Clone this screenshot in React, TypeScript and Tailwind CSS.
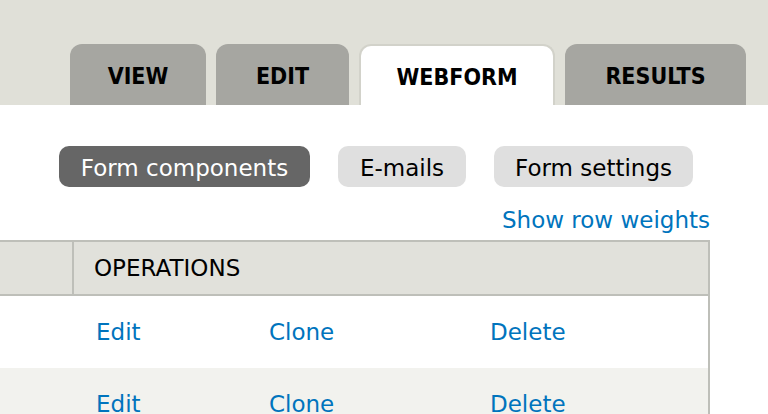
import React from "react";

const font = { fontFamily: '"DejaVu Sans", "Liberation Sans", sans-serif' };
const tabFont = { fontFamily: '"DejaVu Sans Condensed", "DejaVu Sans", sans-serif' };

export default function App() {
  const tabs = [
    { label: "VIEW", w: "w-[136px]", active: false },
    { label: "EDIT", w: "w-[133px]", active: false },
    { label: "WEBFORM", w: "w-[196px]", active: true },
    { label: "RESULTS", w: "w-[181px]", active: false },
  ];
  return (
    <div className="w-[768px] h-[414px] overflow-hidden bg-white" style={font}>
      <div className="h-[105px] bg-[#e0e0d8] flex items-end pl-[70px] gap-[10px]">
        {tabs.map((t) => (
          <div
            key={t.label}
            style={tabFont}
            className={`${t.w} h-[61px] rounded-t-[12px] flex items-center justify-center pt-[3px] text-[23px] font-bold text-black ${
              t.active
                ? "bg-white border-2 border-b-0 border-[#d2d2ca]"
                : "bg-[#a6a6a1]"
            }`}
          >
            {t.label}
          </div>
        ))}
      </div>
      <div className="flex gap-[28px] pl-[59px] pt-[41px]">
        <div className="w-[251px] h-[41px] pt-[3px] rounded-[10px] bg-[#666666] text-white text-[23px] flex items-center justify-center">
          Form components
        </div>
        <div className="w-[128px] h-[41px] pt-[3px] rounded-[10px] bg-[#dfdfdf] text-black text-[23px] flex items-center justify-center">
          E-mails
        </div>
        <div className="w-[199px] h-[41px] pt-[3px] rounded-[10px] bg-[#dfdfdf] text-black text-[23px] flex items-center justify-center">
          Form settings
        </div>
      </div>
      <div className="w-[710px] flex justify-end mt-[17px] h-[36px]">
        <span className="text-[23px] text-[#0074bd] leading-[30px] pt-[1px]">Show row weights</span>
      </div>
      <div className="w-[710px] border-t-2 border-r-2 border-[#bebfb9]">
        <div className="flex h-[54px] bg-[#e1e1db] border-b-2 border-[#bebfb9]">
          <div className="w-[74px] border-r-2 border-[#bebfb9]" />
          <div className="flex items-center pl-[20px] text-[23px] text-black">OPERATIONS</div>
        </div>
        {[0, 1].map((i) => (
          <div
            key={i}
            className={`flex items-center h-[72px] text-[23px] text-[#0074bd] ${
              i === 1 ? "bg-[#f2f2ee]" : "bg-white"
            }`}
          >
            <div className="w-[96px]" />
            <div className="w-[173px]">Edit</div>
            <div className="w-[221px]">Clone</div>
            <div>Delete</div>
          </div>
        ))}
      </div>
    </div>
  );
}
